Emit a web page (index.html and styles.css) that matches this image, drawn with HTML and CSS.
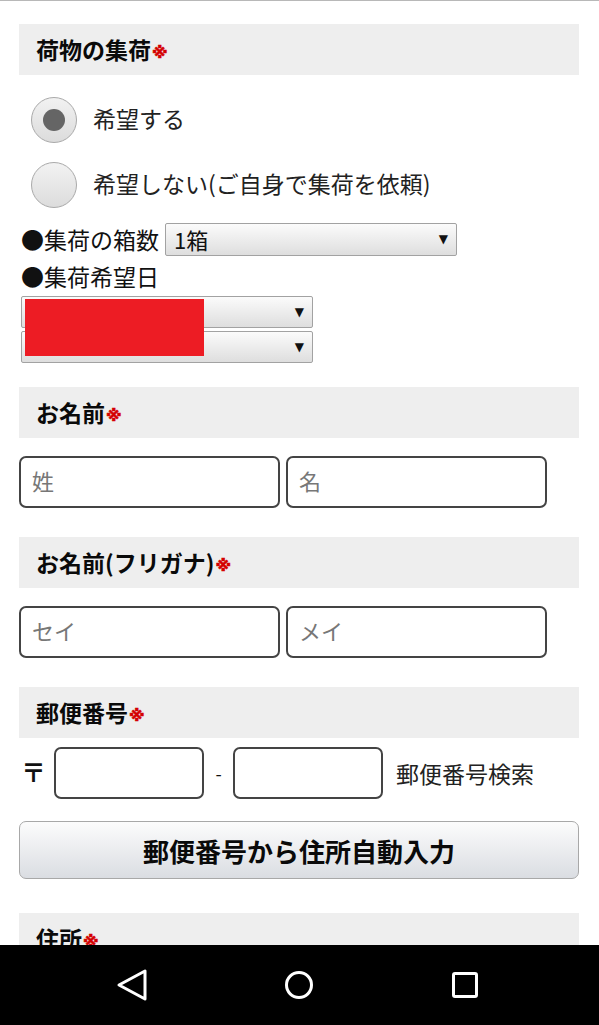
FILE: index.html
```html
<!DOCTYPE html>
<html lang="ja">
<head>
<meta charset="utf-8">
<title>集荷フォーム</title>
<link rel="stylesheet" href="styles.css">
</head>
<body>
<div class="topline"></div>
<main class="form">
  <h2 class="sec sec-first">荷物の集荷<span class="req">※</span></h2>
  <div class="radios">
    <label class="radio-row"><span class="radio checked"><span class="dot"></span></span><span class="rlabel">希望する</span></label>
    <label class="radio-row"><span class="radio"></span><span class="rlabel">希望しない(ご自身で集荷を依頼)</span></label>
  </div>
  <div class="count-row">
    <span class="bullet">●集荷の箱数</span>
    <div class="sel sel-count"><span class="sel-text">1箱</span><span class="arrow">▼</span></div>
  </div>
  <div class="bullet date-label">●集荷希望日</div>
  <div class="dates">
    <div class="sel sel-date"><span class="sel-text"></span><span class="arrow">▼</span></div>
    <div class="sel sel-date"><span class="sel-text"></span><span class="arrow">▼</span></div>
    <div class="redact"></div>
  </div>

  <h2 class="sec sec-name">お名前<span class="req">※</span></h2>
  <div class="pair">
    <div class="inp"><span class="ph">姓</span></div>
    <div class="inp"><span class="ph">名</span></div>
  </div>

  <h2 class="sec">お名前(フリガナ)<span class="req">※</span></h2>
  <div class="pair">
    <div class="inp"><span class="ph">セイ</span></div>
    <div class="inp"><span class="ph">メイ</span></div>
  </div>

  <h2 class="sec">郵便番号<span class="req">※</span></h2>
  <div class="postal">
    <span class="mark">〒</span>
    <div class="inp inp-zip"></div>
    <span class="dash">-</span>
    <div class="inp inp-zip"></div>
    <span class="search">郵便番号検索</span>
  </div>
  <div class="btn">郵便番号から住所自動入力</div>

  <h2 class="sec sec-addr">住所<span class="req">※</span></h2>
</main>
<nav class="navbar">
  <svg class="nav-ic" width="40" height="40" viewBox="0 0 40 40"><path d="M7 20 L33 6 L33 34 Z" fill="none" stroke="#fff" stroke-width="3" stroke-linejoin="round"/></svg>
  <svg class="nav-ic" width="40" height="40" viewBox="0 0 40 40"><circle cx="20" cy="20" r="12.5" fill="none" stroke="#fff" stroke-width="3"/></svg>
  <svg class="nav-ic" width="40" height="40" viewBox="0 0 40 40"><rect x="8.5" y="8.5" width="23" height="23" rx="1.5" fill="none" stroke="#fff" stroke-width="3"/></svg>
</nav>
</body>
</html>
```
FILE: styles.css
```css
html, body {
  margin: 0;
  padding: 0;
  background: #fff;
  height: 1025px;
  overflow: hidden;
}
body {
  font-family: "Noto Sans CJK JP", "Noto Sans", sans-serif;
  color: #111;
  font-size: 23px;
}
.topline {
  height: 1px;
  background: #b8b8b8;
}
.form {
  padding: 0 20px 0 19px;
}
.sec {
  margin: 29px 0 0;
  height: 51px;
  line-height: 51px;
  background: #eeeeee;
  padding-left: 17px;
  font-size: 23px;
  font-weight: bold;
  color: #0a0a0a;
}
.sec-first { margin-top: 23px; }
.sec-name { margin-top: 24px; }
.req {
  color: #d40000;
  font-family: "DejaVu Sans", sans-serif;
  font-size: 16px;
  font-weight: bold;
  margin-left: 1px;
  position: relative;
  top: -1px;
  -webkit-text-stroke: 0.6px #d40000;
}
.radios {
  margin-top: 22px;
  display: flex;
  flex-direction: column;
  gap: 19px;
}
.radio-row {
  display: flex;
  align-items: center;
  padding-left: 12px;
  gap: 17px;
  height: 46px;
}
.radio {
  box-sizing: border-box;
  width: 46px;
  height: 46px;
  border-radius: 50%;
  border: 1.5px solid #a9a9a9;
  background: linear-gradient(#f2f2f2, #dcdcdc);
  display: flex;
  align-items: center;
  justify-content: center;
  flex: none;
}
.dot {
  width: 22px;
  height: 22px;
  border-radius: 50%;
  background: #656565;
}
.rlabel {
  position: relative;
  top: -2px;
  left: -1px;
  color: #222;
}
.count-row {
  margin-top: 14px;
  display: flex;
  align-items: center;
  gap: 6px;
  padding-left: 2px;
}
.bullet { color: #111; }
.sel {
  box-sizing: border-box;
  display: flex;
  align-items: center;
  justify-content: space-between;
  border: 1px solid #a2a2a2;
  border-radius: 2px;
  background: linear-gradient(#fbfbfb, #dedede);
  padding: 0 8px 0 8px;
}
.sel-count {
  width: 292px;
  height: 33px;
}
.sel-text {
  font-size: 22px;
  color: #111;
}
.arrow {
  font-size: 12px;
  color: #111;
  font-family: "DejaVu Sans", sans-serif;
}
.date-label {
  margin-top: 5px;
  height: 30px;
  line-height: 30px;
  padding-left: 2px;
}
.dates {
  position: relative;
  margin-top: 5px;
  margin-left: 2px;
  width: 292px;
  display: flex;
  flex-direction: column;
  gap: 3px;
}
.sel-date {
  width: 292px;
  height: 32px;
}
.redact {
  position: absolute;
  left: 4px;
  top: 3px;
  width: 179px;
  height: 57px;
  background: #ed1c24;
}
.pair {
  margin-top: 18px;
  display: flex;
  gap: 6px;
}
.inp {
  box-sizing: border-box;
  width: 261px;
  height: 52px;
  border: 2px solid #444;
  border-radius: 7px;
  background: #fff;
  display: flex;
  align-items: center;
  padding-left: 11px;
}
.ph {
  color: #777;
  font-size: 22px;
  position: relative;
  top: -2px;
}
.postal {
  margin-top: 9px;
  display: flex;
  align-items: center;
  padding-left: 2px;
}
.mark {
  width: 33px;
  font-size: 25px;
  font-weight: bold;
  position: relative;
  top: -2px;
}
.inp-zip { width: 150px; }
.dash {
  width: 29px;
  text-align: center;
  font-size: 18px;
}
.search {
  margin-left: 13px;
  color: #222;
}
.btn {
  margin-top: 22px;
  box-sizing: border-box;
  height: 58px;
  border: 1px solid #a8a8a8;
  border-radius: 7px;
  background: linear-gradient(#fcfcfc, #dadde2);
  display: flex;
  align-items: center;
  justify-content: center;
  font-size: 26px;
  font-weight: bold;
  color: #0a0a0a;
}
.sec-addr { margin-top: 34px; }
.navbar {
  position: fixed;
  left: 0;
  right: 0;
  bottom: 0;
  height: 80px;
  background: #000;
  display: flex;
  align-items: center;
  justify-content: space-between;
  padding: 0 114px 0 112px;
}
.nav-ic { display: block; }
```
